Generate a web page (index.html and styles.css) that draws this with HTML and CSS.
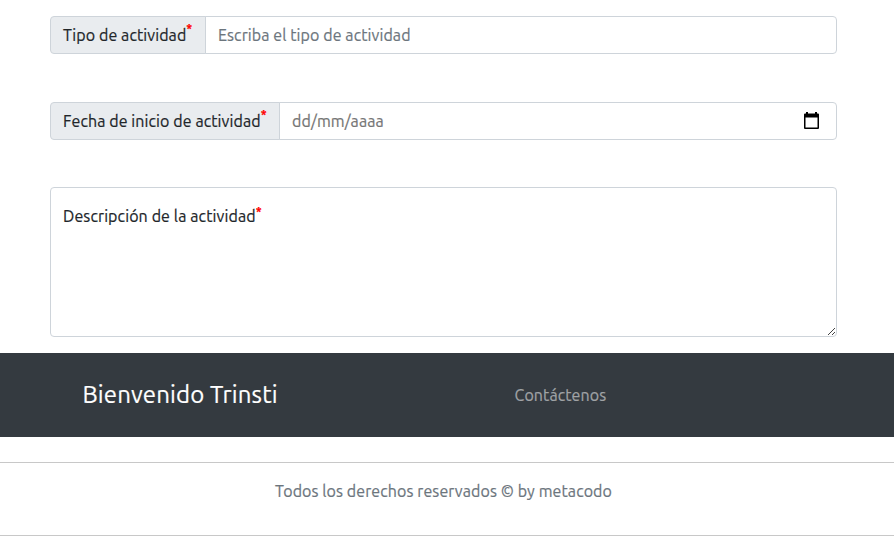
FILE: index.html
```
<!DOCTYPE html>
<html lang="es">
<head>
<meta charset="utf-8">
<title>Trinsti</title>
<link rel="stylesheet" href="styles.css">
</head>
<body>
<form class="form">
  <label class="group">
    <span class="addon">Tipo de actividad<b class="req">*</b></span>
    <span class="control">Escriba el tipo de actividad</span>
  </label>
  <label class="group">
    <span class="addon addon-date">Fecha de inicio de actividad<b class="req">*</b></span>
    <span class="control date">dd/mm/aaaa
      <svg class="calendar" viewBox="0 0 15 17"><path fill="#000" fill-rule="evenodd" d="M2 0h2v1.500h7V0h2v1.500h1q1 0 1 1V16q0 1-1 1H1q-1 0-1-1V2.500q0-1 1-1h1zM1.500 5.500v10h12v-10z"/></svg>
    </span>
  </label>
  <div class="description">Descripción de la actividad<b class="req">*</b>
    <svg class="grip" viewBox="0 0 9 9"><path d="M1 8 8 1M5 8 8 5" stroke="#444" fill="none"/></svg>
  </div>
</form>
<footer>
  <div class="banner">
    <h2 class="brand">Bienvenido Trinsti</h2>
    <a class="contact">Contáctenos</a>
  </div>
  <div class="copyright">Todos los derechos reservados © by metacodo</div>
</footer>
</body>
</html>
```
FILE: styles.css
```
* { box-sizing: border-box; }
body {
  margin: 0;
  background: #fff;
  color: #212529;
  font: 16px/24px Ubuntu, "Noto Sans", sans-serif;
  letter-spacing: 0.09px;
  -webkit-text-stroke: 0.2px;
  overflow: hidden;
}
.form { width: 787px; margin: 16px 0 16px 50px; }
.group { display: flex; height: 38px; margin-bottom: 48px; white-space: nowrap; }
.group + .description { margin-top: -1px; }
.addon {
  width: 156px;
  padding: 6px 12px;
  background: #e9ecef;
  border: 1px solid #ced4da;
  border-radius: 4px 0 0 4px;
}
.addon-date { width: 230px; }
.control {
  flex: 1;
  margin-left: -1px;
  padding: 6px 12px;
  border: 1px solid #ced4da;
  border-radius: 0 4px 4px 0;
  color: #6c757d;
}
.date { display: flex; justify-content: space-between; color: #757575; }
.req { color: #f00; font-size: 12px; line-height: 0; vertical-align: 8px; }
.description .req { vertical-align: 6px; }
.calendar { width: 15px; height: 17px; margin: 3px 5px 0 0; }
.description {
  position: relative;
  height: 150px;
  padding: 16px 12px;
  border: 1px solid #ced4da;
  border-radius: 4px;
  letter-spacing: 0.11px;
}
.grip { position: absolute; right: 0; bottom: 0; width: 9px; height: 9px; }
.banner {
  display: grid;
  grid-template-columns: 432px 1fr;
  align-items: center;
  height: 84px;
  padding-left: 82.500px;
  background: #343a40;
}
.brand { margin: -2px 0 0; color: #fff; font-size: 24px; font-weight: 400; line-height: 29px; letter-spacing: 0.13px; }
.contact { color: #a0a3a6; }
.copyright {
  height: 74px;
  margin-top: 25px;
  padding: 16px 7px 0 0;
  border: solid #c8c8c8;
  border-width: 1px 0;
  color: #6c757d;
  text-align: center;
}
```
